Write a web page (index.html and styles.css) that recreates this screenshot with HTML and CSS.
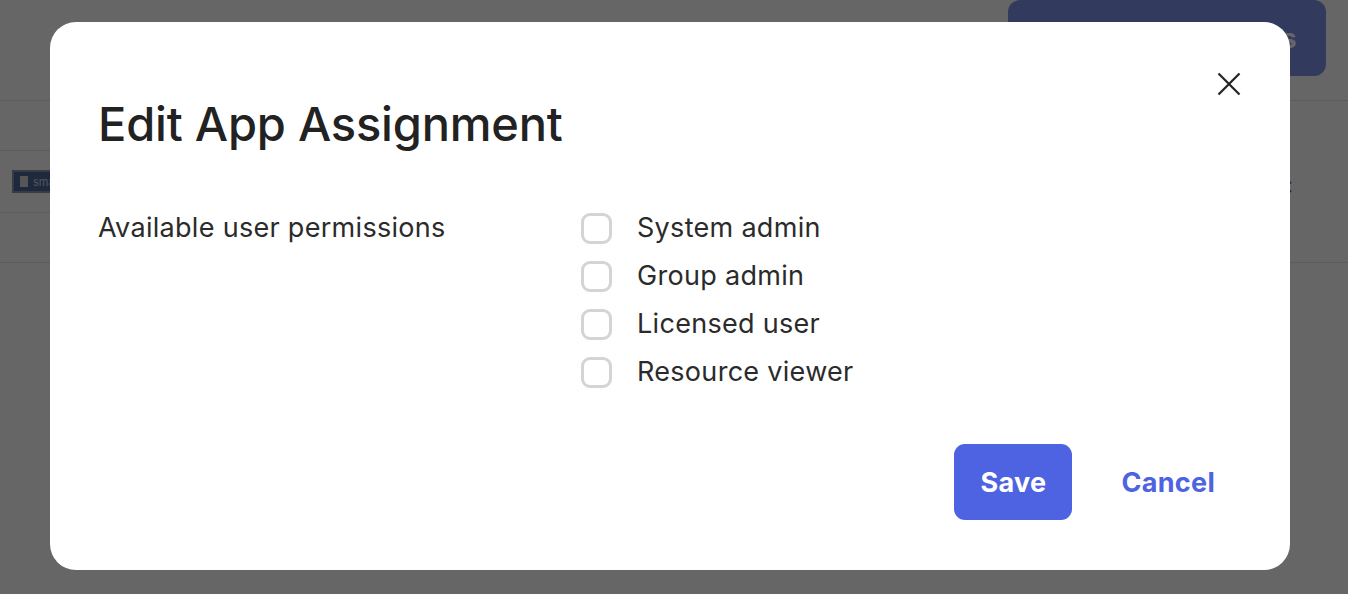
FILE: index.html
```html
<!DOCTYPE html>
<html lang="en">
<head>
  <meta charset="UTF-8" />
  <meta name="viewport" content="width=device-width, initial-scale=1.0"/>
  <title>Edit App Assignment</title>
  <link rel="stylesheet" href="styles.css">
</head>
<body>
  <!-- Page behind the dialog -->
  <div class="page">
    <div class="page-header">
      <button class="btn btn-header">Assign Apps</button>
    </div>
    <div class="table-row">
      <div class="cell-app">
        <div class="app-line">
          <span class="app-chip"><span class="chip-icon"></span>smartsheet</span>
        </div>
      </div>
      <div class="cell-action">
        <svg class="row-remove" width="14" height="14" viewBox="0 0 14 14">
          <path d="M2 2 L12 12 M12 2 L2 12" stroke="#4e63e1" stroke-width="2" fill="none"/>
        </svg>
      </div>
    </div>
  </div>

  <!-- Dialog -->
  <div class="overlay">
    <div class="modal">
      <button class="modal-close" aria-label="Close">
        <svg width="24" height="24" viewBox="0 0 24 24">
          <path d="M1.5 1.5 L22.5 22.5 M22.5 1.5 L1.5 22.5" stroke="#222" stroke-width="2.2" fill="none"/>
        </svg>
      </button>

      <h2 class="modal-title">Edit App Assignment</h2>

      <div class="perm-grid">
        <div class="perm-label">Available user permissions</div>
        <div class="perm-list">
          <label class="perm-option"><span class="checkbox"></span>System admin</label>
          <label class="perm-option"><span class="checkbox"></span>Group admin</label>
          <label class="perm-option"><span class="checkbox"></span>Licensed user</label>
          <label class="perm-option"><span class="checkbox"></span>Resource viewer</label>
        </div>
      </div>

      <div class="modal-footer">
        <button class="btn btn-primary">Save</button>
        <button class="btn btn-link">Cancel</button>
      </div>
    </div>
  </div>
</body>
</html>
```

FILE: styles.css
```css
/* ================================
   Base
   ================================ */
* {
  margin: 0;
  padding: 0;
  box-sizing: border-box;
}
body {
  font-family: Inter, "Noto Sans", sans-serif;
  background-color: #fff;
  color: #2b2b2b;
  overflow: hidden;
}

/* ================================
   Buttons
   ================================ */
.btn {
  display: inline-flex;
  align-items: center;
  justify-content: center;
  height: 76px;
  padding: 0 26px;
  border: none;
  border-radius: 11px;
  font-family: Inter, "Noto Sans", sans-serif;
  font-size: 27px;
  font-weight: 700;
  letter-spacing: 0.3px;
  cursor: pointer;
}
.btn-primary {
  background-color: #4e63e1;
  color: #fff;
  width: 118px;
  padding: 0;
}
.btn-link {
  background: none;
  color: #4e63e1;
  padding: 0 25px;
}

/* ================================
   Page behind the dialog
   ================================ */
.page-header {
  display: flex;
  justify-content: flex-end;
  height: 101px;
  padding: 0 22px 0 0;
  border-bottom: 1px solid #e4e4e4;
}
.btn-header {
  width: 318px;
  justify-content: flex-end;
  padding: 0 29px;
  background-color: #7d91eb;
  color: #fff;
  border-radius: 12px;
}

.table-row {
  display: flex;
  justify-content: space-between;
  height: 162px;
  border-bottom: 1px solid #e4e4e4;
}
.cell-app {
  width: 320px;
  padding-top: 49px;
}
.app-line {
  display: flex;
  align-items: center;
  height: 63px;
  padding-left: 12px;
  border-top: 1px solid #e4e4e4;
  border-bottom: 1px solid #e4e4e4;
}
.app-chip {
  display: inline-flex;
  align-items: center;
  gap: 5px;
  height: 23px;
  padding: 0 6px;
  background-color: #4e6898;
  border: 2px solid #8b96ab;
  color: #c8cfdc;
  font-size: 11px;
}
.chip-icon {
  width: 8px;
  height: 11px;
  background-color: #d8d8d8;
}
.cell-action {
  display: flex;
  align-items: center;
  padding: 0 55px 0 0;
  margin-top: 10px;
}

/* ================================
   Dialog
   ================================ */
.overlay {
  position: fixed;
  inset: 0;
  background-color: rgba(0, 0, 0, 0.6);
  padding: 22px 58px 0 50px;
}
.modal {
  position: relative;
  height: 548px;
  background-color: #fff;
  border-radius: 26px;
  padding: 74px 50px 50px 48px;
}
.modal-close {
  position: absolute;
  top: 50px;
  right: 49px;
  width: 24px;
  height: 24px;
  border: none;
  background: none;
  cursor: pointer;
  display: flex;
}

.modal-title {
  font-size: 47px;
  line-height: 56px;
  font-weight: 500;
  color: #222;
  letter-spacing: -0.2px;
}

.perm-grid {
  display: grid;
  grid-template-columns: 483px 1fr;
  margin-top: 52px;
  font-size: 27px;
  line-height: 48px;
  letter-spacing: 0.3px;
}
.perm-label {
  color: #2b2b2b;
}
.perm-option {
  display: flex;
  align-items: center;
  gap: 25px;
  height: 48px;
  color: #2b2b2b;
  cursor: pointer;
}
.checkbox {
  width: 31px;
  height: 31px;
  border: 3px solid #d4d4d4;
  border-radius: 9px;
  flex-shrink: 0;
}

.modal-footer {
  display: flex;
  justify-content: flex-end;
  gap: 24px;
  margin-top: 48px;
}
```
